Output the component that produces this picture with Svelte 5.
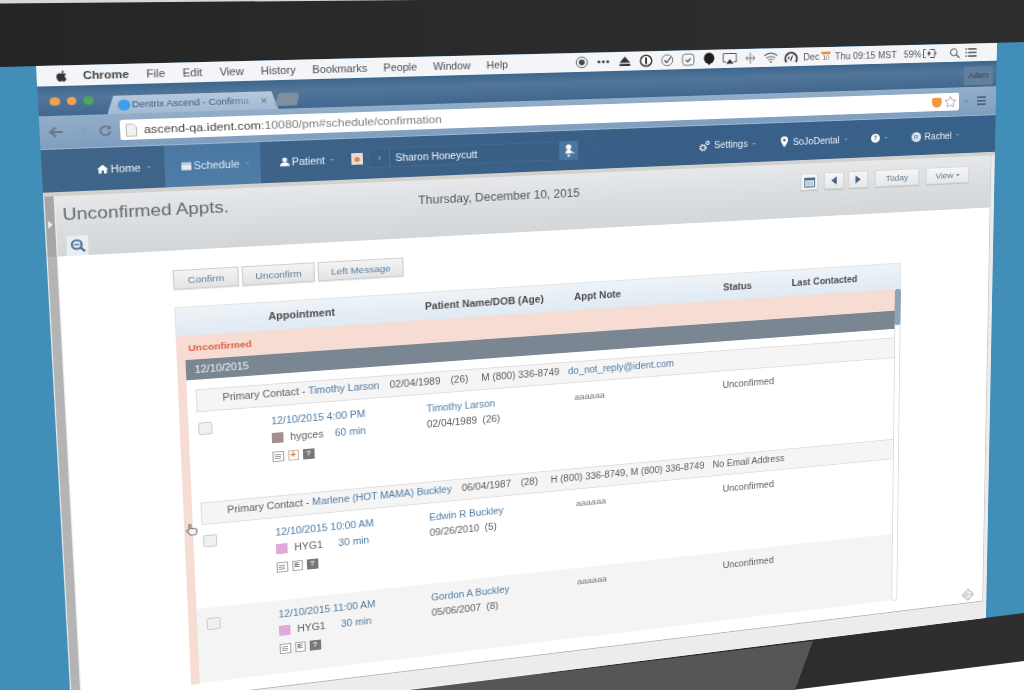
<script>
  const menus = ['File', 'Edit', 'View', 'History', 'Bookmarks', 'People', 'Window', 'Help'];

  const groups = [
    {
      contact: 'Timothy Larson', dob: '02/04/1989', age: '(26)',
      phone: 'M (800) 336-8749', email: 'do_not_reply@ident.com', emailLink: true,
      appts: [
        { when: '12/10/2015 4:00 PM', color: '#a58f8c', op: 'hygces', len: '60 min', badge: 'plus',
          name: 'Timothy Larson', dob: '02/04/1989', age: '(26)', height: 95 }
      ]
    },
    {
      contact: 'Marlene (HOT MAMA) Buckley', dob: '06/04/1987', age: '(28)',
      phone: 'H (800) 336-8749, M (800) 336-8749', email: 'No Email Address', emailLink: false,
      appts: [
        { when: '12/10/2015 10:00 AM', color: '#e0a9d6', op: 'HYG1', len: '30 min', badge: 'e',
          name: 'Edwin R Buckley', dob: '09/26/2010', age: '(5)', height: 89 },
        { when: '12/10/2015 11:00 AM', color: '#e0a9d6', op: 'HYG1', len: '30 min', badge: 'e',
          name: 'Gordon A Buckley', dob: '05/06/2007', age: '(8)', height: 80, shaded: true }
      ]
    }
  ];
</script>

<div class="scene">
  <svg class="photo" width="1024" height="690" viewBox="0 0 1024 690">
    <defs>
      <linearGradient id="lid" x1="0" x2="1" y1="0" y2="0">
        <stop offset="0" stop-color="#252525" />
        <stop offset="0.5" stop-color="#2b2b2b" />
        <stop offset="1" stop-color="#2e2e2e" />
      </linearGradient>
    </defs>
    <rect width="1024" height="690" fill="url(#lid)" />
    <polygon points="0,0 420,0 0,3.500" fill="#d8d8d8" />
    <polygon points="1024,661 1024,690 792,690" fill="#ffffff" />
    <polygon points="370,690 560,672 813,641 795,690" fill="#565656" />
    <polygon points="0,67 1024,42 1024,613 410,690 0,690" fill="#418fb9" />
  </svg>

  <div class="screen">
    <div class="menubar">
      <svg class="apple" viewBox="0 0 24 24" width="13" height="13"><path fill="#333" d="M17.05 12.54c-.03-2.5 2.04-3.7 2.13-3.76-1.16-1.7-2.97-1.93-3.61-1.96-1.54-.16-3 .9-3.78.9-.78 0-1.98-.88-3.26-.86-1.68.03-3.22.98-4.08 2.48-1.74 3.02-.45 7.49 1.25 9.94.83 1.2 1.82 2.55 3.12 2.5 1.25-.05 1.72-.81 3.24-.81 1.51 0 1.94.81 3.26.78 1.35-.02 2.2-1.22 3.02-2.43.95-1.39 1.34-2.74 1.36-2.81-.03-.01-2.61-1-2.65-3.98zM14.6 5.2c.69-.84 1.16-2 1.03-3.16-1 .04-2.2.67-2.91 1.5-.64.74-1.2 1.92-1.05 3.06 1.11.09 2.25-.57 2.93-1.4z" /></svg>
      <b class="appname">Chrome</b>
      {#each menus as m}<span class="menu">{m}</span>{/each}

      <div class="status">
        <svg class="slot" viewBox="0 0 22 14"><circle cx="11" cy="7" r="5.600" fill="none" stroke="#666" /><circle cx="11" cy="7" r="3" fill="#444" /></svg>
        <svg class="slot" viewBox="0 0 22 14"><circle cx="6.500" cy="7" r="1.400" fill="#333" /><circle cx="11" cy="7" r="1.400" fill="#333" /><circle cx="15.500" cy="7" r="1.400" fill="#333" /></svg>
        <svg class="slot" viewBox="0 0 22 14"><path d="M11 2l5.500 6.500h-11zM5.500 9.800h11V12h-11z" fill="#333" /></svg>
        <svg class="slot" viewBox="0 0 22 14"><circle cx="11" cy="7" r="5.800" fill="#fff" stroke="#333" stroke-width="1.500" /><rect x="10" y="3.500" width="2" height="7" fill="#333" /></svg>
        <svg class="slot" viewBox="0 0 22 14"><circle cx="11" cy="7" r="5.800" fill="none" stroke="#777" /><path d="M8 7l2.400 2.500L15 3.500" fill="none" stroke="#444" stroke-width="1.200" /></svg>
        <svg class="slot" viewBox="0 0 22 14"><rect x="5" y="1" width="12" height="12" rx="3" fill="none" stroke="#777" /><path d="M8.500 7.200l2 2 3-3.600" fill="none" stroke="#333" stroke-width="1.200" /></svg>
        <svg class="slot" viewBox="0 0 22 14"><ellipse cx="11" cy="6" rx="5.500" ry="6" fill="#1d1d1d" /><path d="M9.400 11h3.200l-1.600 2.800z" fill="#1d1d1d" /></svg>
        <svg class="slot" viewBox="0 0 22 14"><path d="M7 10.500H4V1.500h14v9h-3" fill="none" stroke="#555" /><path d="M11 7.500l4 5H7z" fill="#333" /></svg>
        <svg class="slot" viewBox="0 0 22 14"><path d="M11 1v12M8.500 4.500L6 7l2.500 2.500M13.500 4.500L16 7l-2.500 2.500M7 7h8" fill="none" stroke="#777" /></svg>
        <svg class="slot" viewBox="0 0 22 14"><path d="M4 5a10 10 0 0 1 14 0M6.300 7.500a7 7 0 0 1 9.400 0M8.400 9.900a4 4 0 0 1 5.200 0" fill="none" stroke="#666" stroke-width="1.100" /><circle cx="11" cy="12" r="1.100" fill="#666" /></svg>
        <svg class="slot" viewBox="0 0 22 14"><path d="M6 12.500a6.300 6.300 0 1 1 10 0" fill="none" stroke="#333" stroke-width="2" /><path d="M10.500 11l2-5.500M8 9.500l1-3" stroke="#333" stroke-width="1.200" /></svg>
        <span class="st-dec">Dec</span>
        <span class="cal"><i></i>10</span>
        <span class="st-time">Thu 09:15 MST</span>
        <span class="st-bat">59%</span>
        <svg class="battery" viewBox="0 0 17 12" width="17" height="12"><path d="M4 1.500H1.500v9H4M9 1.500h5v9H9M15.500 4.500v3" fill="none" stroke="#555" /><path d="M8.500 2L5.500 6.500h2L6.500 10l3.500-5H8z" fill="#333" /></svg>
        <svg class="st-search" viewBox="0 0 14 14" width="13" height="13"><circle cx="5.600" cy="5.600" r="4" fill="none" stroke="#555" stroke-width="1.200" /><path d="M8.600 8.600l4 4" stroke="#555" stroke-width="1.400" /></svg>
        <svg class="st-list" viewBox="0 0 14 12" width="14" height="12"><path d="M3.500 2h10M3.500 6h10M3.500 10h10M.5 2h1.500M.5 6h1.500M.5 10h1.500" stroke="#444" stroke-width="1.400" /></svg>
      </div>
    </div>

    <div class="tabstrip">
      <span class="light orange first"></span>
      <span class="light orange"></span>
      <span class="light green"></span>
      <div class="tab">
        <span class="favicon"></span>
        <span class="tab-title">Dentrix Ascend - Confirma</span>
        <span class="tab-x">×</span>
      </div>
      <span class="newtab"></span>
      <span class="profile">Adam</span>
    </div>

    <div class="toolbar">
      <svg class="tool back" viewBox="0 0 14 12" width="14" height="12"><path d="M13 6H3M7 1.500L2 6l5 4.500" fill="none" stroke="#66788c" stroke-width="2" /></svg>
      <svg class="tool fwd" viewBox="0 0 14 12" width="14" height="12"><path d="M1 6h10M7 1.500L12 6l-5 4.500" fill="none" stroke="#8aa1b9" stroke-width="1.600" /></svg>
      <svg class="tool reload" viewBox="0 0 12 12" width="12" height="12"><path d="M10 4.200A4.400 4.400 0 1 0 10.400 7" fill="none" stroke="#66788c" stroke-width="1.800" /><path d="M10.800 1v4H7z" fill="#66788c" /></svg>
      <div class="address">
        <svg viewBox="0 0 10 13" width="10" height="13"><path d="M.5.500h6l3 3v9H.5z" fill="#f2f2f2" stroke="#bbb" /></svg>
        <span class="url"><b>ascend-qa.ident.com</b>:10080/pm#schedule/confirmation</span>
        <span class="fox"></span>
        <svg class="star" viewBox="0 0 14 14" width="14" height="14"><path d="M7 1l1.900 3.900 4.300.6-3.100 3 .7 4.300L7 10.800 3.200 12.800l.7-4.300-3.100-3 4.300-.6z" fill="#fff" stroke="#aaa" /></svg>
      </div>
      <span class="more">»</span>
      <span class="burger"><i></i><i></i><i></i></span>
    </div>

    <nav class="nav">
      <span class="nav-item home">
        <svg viewBox="0 0 10 10" width="10" height="10"><path d="M5 .8L0 5.200h1.400V9.500h2.500V6.500h2.200v3h2.500V5.200H10z" fill="#fff" /></svg>
        Home<i class="caret"></i>
      </span>
      <span class="nav-item sched">
        <svg viewBox="0 0 10 10" width="9" height="10"><path d="M0 1.500h10V10H0z" fill="#e4e9ef" /><path d="M0 3.500h10M2 0v2M8 0v2" stroke="#8aa7c2" /></svg>
        Schedule<i class="caret"></i>
      </span>
      <span class="nav-item patient">
        <svg viewBox="0 0 10 10" width="9" height="10"><circle cx="5" cy="2.700" r="2.500" fill="#fff" /><path d="M0 10c0-3 2-4 3.700-4.400h2.600C8 6 10 7 10 10z" fill="#fff" /></svg>
        Patient<i class="caret"></i>
      </span>
      <span class="chart"><i></i></span>
      <div class="search">
        <span class="arrow">›</span>
        <span class="who">Sharon Honeycutt</span>
      </div>
      <span class="search-btn">
        <svg viewBox="0 0 14 16" width="13" height="15"><circle cx="7" cy="3.500" r="3" fill="#fff" /><path d="M3.500 11c0-3 1.500-4.500 3.500-4.500S10.500 8 10.500 11z" fill="#fff" /><circle cx="7" cy="13.500" r="1.500" fill="#dfe7ef" /><path d="M10.500 9l2.500 2" stroke="#dfe7ef" /></svg>
      </span>
      <span class="nav-item settings">
        <svg viewBox="0 0 13 13" width="12" height="12"><circle cx="4.500" cy="8.500" r="3" fill="none" stroke="#fff" stroke-width="2.200" stroke-dasharray="1.800 .6" /><circle cx="10" cy="3" r="1.800" fill="none" stroke="#fff" stroke-width="1.200" /></svg>
        Settings<i class="caret"></i>
      </span>
      <span class="nav-item office">
        <svg viewBox="0 0 8 12" width="8" height="12"><path d="M4 0a4 4 0 0 0-4 4c0 2.500 4 8 4 8s4-5.500 4-8a4 4 0 0 0-4-4z" fill="#fff" /><circle cx="4" cy="4" r="1.500" fill="#3c648c" /></svg>
        SoJoDental<i class="caret"></i>
      </span>
      <span class="nav-item help">
        <span class="q">?</span><i class="caret"></i>
      </span>
      <span class="nav-item user">
        <span class="bubble">R</span>
        Rachel<i class="caret"></i>
      </span>
    </nav>

    <div class="panel">
      <div class="handle"><span></span></div>
      <div class="panel-main">
        <header class="head">
          <div class="title-col">
            <h1>Unconfirmed Appts.</h1>
            <button class="zoomout" aria-label="Zoom out">
              <svg viewBox="0 0 14 14" width="14" height="14"><circle cx="6" cy="6" r="4.300" fill="none" stroke="#3d6a90" stroke-width="1.800" /><path d="M9.200 9.200l3.800 3.800" stroke="#3d6a90" stroke-width="2" /><path d="M3.800 6h4.400" stroke="#3d6a90" stroke-width="1.400" /></svg>
            </button>
          </div>
          <div class="day">Thursday, December 10, 2015</div>
          <div class="controls">
            <button class="btn cal-btn" aria-label="Calendar">
              <svg viewBox="0 0 12 12" width="12" height="12"><path d="M.5 1.500h11v10H.5z" fill="#e8ecf0" stroke="#4a6a8a" /><path d="M0 1h12v3H0z" fill="#4a6a8a" /><path d="M2 6h8M2 8h8M2 10h8" stroke="#7d95ad" stroke-dasharray="1.500 .8" /></svg>
            </button>
            <button class="btn nav-btn" aria-label="Previous"><svg viewBox="0 0 6 9" width="6" height="9"><path d="M6 0v9L0 4.500z" fill="#3f6285" /></svg></button>
            <button class="btn nav-btn next" aria-label="Next"><svg viewBox="0 0 6 9" width="6" height="9"><path d="M0 0v9l6-4.500z" fill="#3f6285" /></svg></button>
            <button class="btn today">Today</button>
            <button class="btn view">View <i class="caret dark"></i></button>
          </div>
        </header>

        <div class="content">
          <div class="actions">
            <button class="act confirm">Confirm</button>
            <button class="act unconfirm">Unconfirm</button>
            <button class="act left">Left Message</button>
          </div>

          <div class="table">
            <div class="thead cols">
              <span></span>
              <span>Appointment</span>
              <span>Patient Name/DOB (Age)</span>
              <span>Appt Note</span>
              <span>Status</span>
              <span>Last Contacted</span>
            </div>
            <div class="tbody">
              <div class="list">
                <div class="pink-label">Unconfirmed</div>
                <div class="date-bar">12/10/2015</div>
                {#each groups as g, gi}
                  <div class="contact" class:first={gi === 0}>
                    <span>Primary Contact - <a href="#c">{g.contact}</a></span>
                    <span>{g.dob}</span>
                    <span>{g.age}</span>
                    <span class="phone">{g.phone}</span>
                    <span class="mail" class:link={g.emailLink}>{g.email}</span>
                  </div>
                  {#each g.appts as a}
                    <div class="appt cols" class:shaded={a.shaded} style="height: {a.height}px">
                      <span class="check"></span>
                      <div class="when">
                        <a href="#a">{a.when}</a>
                        <div class="op">
                          <i class="swatch" style="background: {a.color}"></i>
                          <span>{a.op}</span>
                          <a href="#a" class="len">{a.len}</a>
                        </div>
                        <div class="icons">
                          <span class="ic note"><i></i><i></i><i></i></span>
                          {#if a.badge === 'plus'}
                            <span class="ic plus">+</span>
                          {:else}
                            <span class="ic e">E</span>
                          {/if}
                          <span class="ic help-ic">?</span>
                        </div>
                      </div>
                      <div class="pat">
                        <a href="#p">{a.name}</a>
                        <div>{a.dob} &nbsp;{a.age}</div>
                      </div>
                      <span class="memo">aaaaaa</span>
                      <span class="stat">Unconfirmed</span>
                      <span></span>
                    </div>
                  {/each}
                {/each}
              </div>
              <div class="scroll"><i></i></div>
            </div>
          </div>

          <svg class="resize" viewBox="0 0 14 14" width="15" height="15"><path d="M7 .8L13.200 7 7 13.200.8 7z" fill="#f4f4f4" stroke="#b5b5b5" /><path d="M1 7h12M7 4l-3 3 3 3" fill="none" stroke="#c4c4c4" /></svg>
          <svg class="cursor" viewBox="0 0 14 16" width="12" height="14"><path d="M4 8V2.200a1 1 0 0 1 2 0V6l5 1c1 .3 1.500 1 1.400 2l-.6 4c-.1 1-.8 1.500-1.800 1.500H6.500c-.8 0-1.300-.3-1.800-1L1.500 9.500c-.8-1.200.6-2.200 1.500-1.300z" fill="#f2f2f2" stroke="#555" /></svg>
        </div>
      </div>
    </div>
  </div>
</div>

<style>
  :global(body) {
    margin: 0;
    background: #2d2d2d;
  }

  .scene {
    position: relative;
    width: 1024px;
    height: 690px;
    overflow: hidden;
    font-family: "Liberation Sans", Arial, sans-serif;
  }

  .photo {
    position: absolute;
    inset: 0;
  }

  /* the laptop screen is photographed at an angle */
  .screen {
    position: absolute;
    left: 0;
    top: 0;
    width: 960px;
    height: 680px;
    display: flex;
    flex-direction: column;
    overflow: hidden;
    background: #f0f0f0;
    transform-origin: 0 0;
    transform: matrix3d(1.17648, -0.016396, 0, 0.00017597, 0.0591, 1.03732, 0, 0.00007912, 0, 0, 1, 0, 36, 66, 0, 1);
    filter: blur(0.5px);
  }

  a {
    color: #4d7ba3;
    text-decoration: none;
  }

  /* menu bar */
  .menubar {
    height: 20px;
    flex: none;
    display: flex;
    align-items: center;
    background: #f3f5f9;
    color: #4c4c4c;
    font-size: 10.3px;
    padding-left: 15px;
  }

  .apple {
    margin-right: 12px;
  }

  .appname {
    font-size: 10.6px;
    color: #444;
    margin-right: 15.5px;
  }

  .menu {
    margin-right: 15.5px;
  }

  .status {
    margin-left: auto;
    display: flex;
    align-items: center;
    padding-right: 23px;
    font-size: 10px;
    color: #555;
  }

  .slot {
    width: 22px;
    height: 14px;
  }

  .st-dec {
    margin-left: 2px;
  }

  .cal {
    position: relative;
    width: 10px;
    margin: 0 3px 0 2px;
    padding-top: 3px;
    font-size: 7px;
    text-align: center;
    background: #fff;
  }

  .cal i {
    position: absolute;
    left: 0;
    right: 0;
    top: 0;
    height: 3px;
    background: #f0913a;
  }

  .st-time {
    margin-left: 2px;
  }

  .st-bat {
    margin-left: 8px;
  }

  .battery {
    margin-left: 1px;
  }

  .st-search {
    margin-left: 14px;
  }

  .st-list {
    margin-left: 5px;
  }

  /* tabs */
  .tabstrip {
    height: 29px;
    flex: none;
    position: relative;
    display: flex;
    align-items: flex-end;
    background: linear-gradient(#3d668e, #527699 38%, #41688f);
    padding-left: 10px;
  }

  .light {
    width: 8.5px;
    height: 8.5px;
    border-radius: 50%;
    margin: 0 6px 10px 0;
  }

  .orange {
    background: #f5a04e;
  }

  .green {
    background: #4ea65a;
  }

  .tab {
    width: 154px;
    height: 18px;
    margin-left: 6px;
    display: flex;
    align-items: center;
    padding: 0 10px 0 9px;
    box-sizing: border-box;
    background: linear-gradient(#b6c9dc, #a3bad2);
    clip-path: polygon(0 100%, 6px 0, 148px 0, 154px 100%);
    color: #3f5873;
    font-size: 9px;
  }

  .favicon {
    flex: none;
    width: 11px;
    height: 11px;
    border-radius: 50%;
    background: #3f9fe8;
    margin-right: 2px;
  }

  .tab-title {
    flex: 1;
    white-space: nowrap;
    -webkit-mask-image: linear-gradient(90deg, #000 78%, transparent);
    mask-image: linear-gradient(90deg, #000 78%, transparent);
  }

  .tab-x {
    font-size: 11px;
    color: #5d6f82;
    margin-left: 1px;
  }

  .newtab {
    width: 20px;
    height: 13px;
    margin: 0 0 3px -2px;
    background: #808e9d;
    border-radius: 3px 3px 0 0;
    transform: skewX(-12deg);
  }

  .profile {
    position: absolute;
    right: 4px;
    top: 6px;
    width: 34px;
    height: 21px;
    line-height: 21px;
    text-align: center;
    font-size: 9px;
    color: #2f4560;
    background: #627e9d;
    border-radius: 2px;
  }

  /* toolbar */
  .toolbar {
    height: 33px;
    flex: none;
    box-sizing: border-box;
    display: flex;
    align-items: center;
    padding: 0 11px 0 7px;
    background: linear-gradient(#93adc9, #7f9fc0);
    border-bottom: 1px solid #9cb8d3;
  }

  .tool {
    flex: none;
  }

  .back {
    margin-right: 8px;
  }

  .fwd {
    margin-right: 8px;
  }

  .address {
    margin-left: 7px;
    width: 847px;
    height: 20px;
    box-sizing: border-box;
    display: flex;
    align-items: center;
    padding: 0 3px 0 5px;
    background: #fff;
    border-radius: 2px;
    font-size: 11.4px;
    color: #7b7b7b;
  }

  .url {
    margin-left: 6px;
    white-space: nowrap;
  }

  .url b {
    font-weight: 400;
    color: #444;
  }

  .fox {
    margin-left: auto;
    width: 11px;
    height: 11px;
    background: #ef9a43;
    border-radius: 2px 2px 6px 6px;
    margin-right: 3px;
  }

  .more {
    margin-left: 6px;
    font-size: 9px;
    color: #5f7d9b;
  }

  .burger {
    margin-left: 10px;
    width: 10px;
    display: flex;
    flex-direction: column;
    gap: 2px;
  }

  .burger i {
    height: 2px;
    background: #4d6178;
  }

  /* app nav */
  .nav {
    height: 42px;
    flex: none;
    display: flex;
    align-items: center;
    color: #fff;
    font-size: 10px;
    background: linear-gradient(90deg, #3f6589, #395f87 60%, #38628b);
    white-space: nowrap;
  }

  .nav-item {
    height: 100%;
    display: flex;
    align-items: center;
    box-sizing: border-box;
    color: #eef3f8;
  }

  .nav-item svg {
    margin-right: 2px;
    flex: none;
  }

  .caret {
    display: inline-block;
    width: 0;
    height: 0;
    margin-left: 5px;
    border-left: 2.5px solid transparent;
    border-right: 2.5px solid transparent;
    border-top: 2.5px solid #7f9bb8;
  }

  .caret.dark {
    margin-left: 1px;
    border-top-color: #3f6285;
  }

  .home {
    margin-left: 48px;
    width: 60px;
  }

  .sched {
    width: 87px;
    padding-left: 15px;
    background: linear-gradient(#4a78a3, #4f7da7);
    color: #dfe8f1;
  }

  .patient {
    margin-left: 18px;
    width: 67px;
  }

  .chart {
    width: 11px;
    height: 12px;
    background: #e6dcd3;
    display: flex;
    align-items: center;
    justify-content: center;
  }

  .chart i {
    width: 5px;
    height: 5px;
    border-radius: 50%;
    background: #ea7f3a;
  }

  .search {
    margin-left: 6px;
    width: 186px;
    height: 20px;
    box-sizing: border-box;
    display: flex;
    align-items: center;
    background: #3a5f85;
    border: 1px solid #44698f;
    border-right: none;
  }

  .arrow {
    width: 18px;
    text-align: center;
    border-right: 1px solid #4d7297;
    height: 100%;
    line-height: 17px;
    color: #8fa9c2;
  }

  .who {
    margin-left: 5px;
    color: #f2f5f8;
  }

  .search-btn {
    margin-left: 1px;
    width: 19px;
    height: 20px;
    background: #4b769f;
    display: flex;
    align-items: center;
    justify-content: center;
  }

  .settings {
    margin-left: 126px;
    margin-top: 1px;
  }

  .settings svg {
    margin-right: 4px;
  }

  .office {
    margin-left: 27px;
  }

  .office svg {
    margin-right: 5px;
  }

  .help {
    margin-left: 26px;
  }

  .q {
    width: 10px;
    height: 10px;
    border-radius: 50%;
    background: #fff;
    color: #3c648c;
    font-size: 8px;
    font-weight: 700;
    line-height: 10px;
    text-align: center;
  }

  .user {
    margin-left: 27px;
  }

  .bubble {
    width: 11px;
    height: 11px;
    border-radius: 50%;
    background: #dde6ee;
    color: #3c648c;
    font-size: 7px;
    line-height: 11px;
    text-align: center;
    margin-right: 4px;
  }

  /* page */
  .panel {
    flex: 1;
    min-height: 0;
    display: flex;
    border-top: 4px solid #d3d1cd;
    background: #ececec;
  }

  .handle {
    flex: none;
    width: 8px;
    margin: 0 0 0 1px;
    box-sizing: border-box;
    padding-top: 24px;
    background: linear-gradient(#a6a6a6 60px, #b4b4b4 60px);
  }

  .handle span {
    display: block;
    width: 0;
    margin-left: 2px;
    border-left: 4px solid #eee;
    border-top: 4px solid transparent;
    border-bottom: 4px solid transparent;
  }

  .panel-main {
    width: 945px;
    height: 530px;
    margin-left: 1px;
    display: flex;
    flex-direction: column;
    background: #fff;
    border-right: 1px solid #cfcfcf;
    border-bottom: 1px solid #b8b8b8;
  }

  .head {
    flex: none;
    height: 60px;
    box-sizing: border-box;
    display: flex;
    align-items: flex-start;
    padding: 9px 25px 0 6px;
    background: linear-gradient(#e6e8ea, #dcdfe2 45%, #d2d6d9);
  }

  .title-col {
    width: 152px;
  }

  h1 {
    margin: 0;
    font-size: 17px;
    font-weight: 400;
    line-height: 20px;
    color: #666;
    white-space: nowrap;
  }

  .zoomout {
    margin: 11px 0 0 2px;
    width: 19px;
    height: 20px;
    padding: 0;
    display: flex;
    align-items: center;
    justify-content: center;
    background: #e9eef3;
    border: none;
  }

  .day {
    margin: 5px 0 0 175px;
    font-size: 12px;
    line-height: 14px;
    color: #555;
    white-space: nowrap;
  }

  .controls {
    margin-left: auto;
    display: flex;
    margin-top: 2px;
  }

  button {
    font-family: inherit;
  }

  .btn {
    height: 19px;
    padding: 0;
    display: flex;
    align-items: center;
    justify-content: center;
    gap: 2px;
    font-size: 9.5px;
    color: #5b7896;
    background: linear-gradient(#f6f6f6, #e6e7e8);
    border: 1px solid #d7d8d9;
    box-shadow: 0 1px 1px rgba(0, 0, 0, 0.12);
  }

  .cal-btn {
    width: 19px;
    background: #f2f4f6;
    margin-right: 7px;
  }

  .nav-btn {
    width: 22px;
  }

  .next {
    margin-left: 5px;
  }

  .today {
    width: 50px;
    margin-left: 8px;
  }

  .view {
    width: 50px;
    margin-left: 8px;
  }

  .content {
    position: relative;
    flex: 1;
    min-height: 0;
    padding: 20px 0 0 101px;
    background: #fff;
  }

  .actions {
    display: flex;
    gap: 3px;
    margin-bottom: 18px;
  }

  .act {
    height: 20px;
    padding: 0;
    font-size: 9.5px;
    color: #5b7c9d;
    background: linear-gradient(#f4f4f4, #e2e3e4);
    border: 1px solid #cdcecf;
    box-shadow: 0 1px 1px rgba(0, 0, 0, 0.1);
  }

  .confirm {
    width: 60px;
  }

  .unconfirm {
    width: 68px;
  }

  .left {
    width: 82px;
  }

  .table {
    width: 742px;
    color: #5c5c5c;
    font-size: 10px;
  }

  .cols {
    display: grid;
    grid-template-columns: 85px 150px 150px 157.5px 75px 1fr;
  }

  .thead {
    height: 30px;
    box-sizing: border-box;
    padding-top: 8px;
    font-weight: 700;
    font-size: 10.2px;
    line-height: 14px;
    color: #4a4a4a;
    white-space: nowrap;
    background: linear-gradient(#eef3f7, #dfeaf3);
    border: 1px solid #dde5ec;
    border-bottom: none;
  }

  .tbody {
    display: flex;
    height: 369px;
    border-left: 8px solid #f6dcd2;
    background: #fff;
  }

  .list {
    width: 727px;
    flex: none;
    overflow: hidden;
  }

  .pink-label {
    height: 25px;
    box-sizing: border-box;
    padding: 6px 0 0 3px;
    background: #f6dcd2;
    color: #da6248;
    font-size: 9.5px;
    font-weight: 700;
    line-height: 13px;
  }

  .date-bar {
    height: 21px;
    line-height: 21px;
    padding-left: 8px;
    background: #7a8691;
    color: #f0f2f4;
    font-size: 10px;
  }

  .contact {
    height: 24px;
    margin-left: 8px;
    padding: 0 0 4px 23.5px;
    box-sizing: border-box;
    display: flex;
    align-items: center;
    background: #f5f5f5;
    border: 1px solid #dedede;
    border-right: none;
    white-space: nowrap;
    gap: 10px;
  }

  .contact.first {
    margin-top: 10px;
  }

  .phone {
    margin-left: 3px;
  }

  .mail {
    margin-left: -1px;
  }

  .mail.link {
    color: #4d7ba3;
  }

  .appt {
    grid-template-columns: 77px 150px 150px 157.5px 75px 1fr;
    padding-top: 10px;
    box-sizing: border-box;
  }

  .shaded {
    background: #f4f4f4;
  }

  .check {
    width: 12.5px;
    height: 12.5px;
    margin: 1px 0 0 9px;
    box-sizing: border-box;
    background: #f0f0f0;
    border: 1px solid #ccc;
    border-radius: 2px;
  }

  .when {
    width: 94px;
    line-height: 12px;
    white-space: nowrap;
  }

  .op {
    position: relative;
    display: flex;
    align-items: center;
    margin-top: 6px;
    height: 11px;
  }

  .swatch {
    width: 10.5px;
    height: 10.5px;
    margin-right: 7px;
    flex: none;
  }

  .len {
    position: absolute;
    right: 4px;
  }

  .icons {
    display: flex;
    gap: 4px;
    margin-top: 9px;
  }

  .ic {
    width: 10.5px;
    height: 10.5px;
    box-sizing: border-box;
    display: flex;
    align-items: center;
    justify-content: center;
    font-size: 8px;
    font-weight: 700;
    border: 1px solid #a3a3a3;
    color: #666;
    background: #fff;
  }

  .note {
    flex-direction: column;
    gap: 1px;
  }

  .note i {
    width: 6px;
    height: 1px;
    background: #999;
  }

  .plus {
    color: #e8792f;
    font-size: 10px;
    border-color: #c9b7a8;
  }

  .help-ic {
    background: #777;
    color: #eee;
    border-color: #777;
  }

  .pat {
    line-height: 12px;
    white-space: nowrap;
  }

  .pat div {
    margin-top: 4.5px;
  }

  .memo {
    font-size: 9.5px;
    line-height: 12px;
    color: #777;
  }

  .stat {
    line-height: 12px;
    white-space: nowrap;
  }

  .scroll {
    width: 7px;
    flex: none;
    box-sizing: border-box;
    border: 1px solid #dcdcdc;
    border-radius: 3px;
  }

  .scroll i {
    display: block;
    height: 42px;
    margin: -1px;
    background: #8fa3b8;
    border-radius: 3px;
  }

  .resize {
    position: absolute;
    right: 10px;
    bottom: 2px;
  }

  .cursor {
    position: absolute;
    left: 102px;
    top: 284px;
  }
</style>
